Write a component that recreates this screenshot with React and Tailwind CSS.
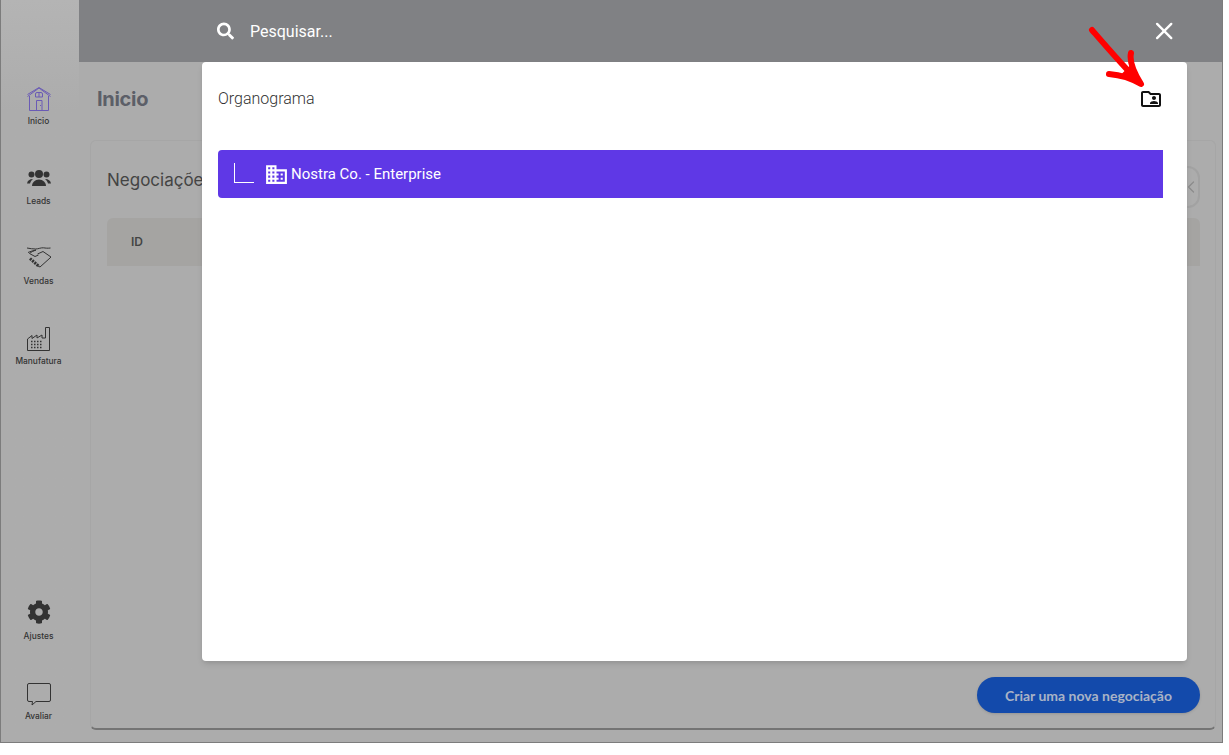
import React from 'react';
import { FaCog, FaSearch } from 'react-icons/fa';
import { MdOutlineFolderShared, MdDomain } from 'react-icons/md';
import { X, ChevronLeft } from 'lucide-react';

const HomeIcon = () => (
  <svg width="24" height="24" viewBox="0 0 24 24" fill="none" stroke="#6a5bb5" strokeWidth="1">
    <path d="M.5 9.500 12 1l11.500 8.500M.5 7.500 12 .5M23.500 7.500 12 .5" />
    <path d="M2.500 9v14.500h19V9" />
    <path d="M8.500 10V7a1.500 1.500 0 0 1 1.500-1.500h4A1.500 1.500 0 0 1 15.500 7v3h-7zM12 5.500V10" />
    <path d="M9.500 23.500V13.500h5.500v10M13 18.500h1" />
  </svg>
);

const LeadsIcon = () => (
  <svg width="24" height="17" viewBox="0 0 24 17" fill="#333" className="mb-[4px]">
    <circle cx="12" cy="4" r="4" />
    <circle cx="4.500" cy="4.500" r="3" />
    <circle cx="19.500" cy="4.500" r="3" />
    <path d="M5 16c0-3.500 3-6.500 7-6.500s7 3 7 6.500z" />
    <path d="M0 13.500C.5 10.500 2.500 9 6 9 4.500 10.200 3.500 11.800 3 13.500z" />
    <path d="M24 13.500C23.500 10.500 21.500 9 18 9c1.500 1.200 2.500 2.800 3 4.500z" />
  </svg>
);

const HandshakeIcon = () => (
  <svg width="24" height="24" viewBox="0 0 24 24" fill="none" stroke="#333" strokeWidth="1">
    <path d="M0 1c3 .6 6 1 8.500 1 3 0 5.500-1.500 8-1.200 2 .3 4 .6 7 .2" />
    <path d="M1 5.500C3.500 4.500 6 3.500 9 3 6.500 4 4 5 2.500 6.500L8 9.500l3.500-1.500" />
    <path d="M24 10 16 4.500 10.500 7" />
    <path d="M24 10l-1 1-10 9-2-1" />
    <path d="M3 11.500 12 19.500" strokeWidth="3" strokeDasharray="2 1" />
  </svg>
);

const FactoryIcon = () => (
  <svg width="24" height="24" viewBox="0 0 24 24" fill="none" stroke="#333" strokeWidth="1">
    <path d="M.5 23.500V12L5 8.500V11.500L10 8V11L15 8V11H18.500V.5H22.500V23.500Z" />
    <path d="M4 14.500h12M4 17.500h12M4 20.500h12" strokeWidth="1.500" strokeDasharray="1.500 1.500" />
  </svg>
);

const ChatIcon = () => (
  <svg width="24" height="23" viewBox="0 0 24 23" fill="none" stroke="#333" strokeWidth="1">
    <path d="M2 .5h20A1.500 1.500 0 0 1 23.500 2v15a1.500 1.500 0 0 1-1.500 1.500H9l-4 3.500 .5-3.500H2A1.500 1.500 0 0 1 .5 17V2A1.500 1.500 0 0 1 2 .5z" />
  </svg>
);

const navTop = [
  { label: 'Inicio', icon: <HomeIcon /> },
  { label: 'Leads', icon: <LeadsIcon /> },
  { label: 'Vendas', icon: <HandshakeIcon /> },
  { label: 'Manufatura', icon: <FactoryIcon /> },
];

const navBottom = [
  { label: 'Ajustes', icon: <FaCog size={24} color="#333" className="mb-[2px]" /> },
  { label: 'Avaliar', icon: <ChatIcon /> },
];

const NavItem = ({ label, icon }) => (
  <div className="h-[46px] flex flex-col items-center">
    <div className="h-[28px] flex items-end justify-center">{icon}</div>
    <span className="mt-[4px] text-[8.4px] leading-[12px] font-medium text-[#333]">{label}</span>
  </div>
);

export default function App() {
  return (
    <div className="relative w-[1229px] h-[755px] bg-white overflow-hidden font-['Inter',sans-serif]">
      {/* Page behind the overlay */}
      <div className="w-[1223px] h-[743px] flex bg-[#acacac] border-l border-r border-b border-[#7c7c7c]">
        <aside className="w-[78px] shrink-0 flex flex-col justify-between pt-[83px] pr-[3px] pb-[18px] bg-gradient-to-b from-[#b4b4b4] to-[#acacac] to-[15%]">
          <div className="flex flex-col gap-[34px]">
            {navTop.map((item) => <NavItem key={item.label} {...item} />)}
          </div>
          <div className="flex flex-col gap-[34px]">
            {navBottom.map((item) => <NavItem key={item.label} {...item} />)}
          </div>
        </aside>

        <main className="flex-1 min-w-0 flex flex-col">
          <div className="h-[62px] bg-[#808184] shrink-0" />
          <h1 className="h-[78px] pl-[18px] pt-[23px] text-[20px] leading-[28px] font-bold tracking-[-0.3px] text-[#5c5f68] shrink-0">Inicio</h1>
          <section className="w-[1126px] ml-[11px] h-[590px] rounded-md bg-[#acacac] border border-[#a6a6a6] border-b-[#747474] border-b-2 pl-[16px] pr-[15px] flex flex-col">
            <div className="h-[77px] flex items-center justify-between">
              <h2 className="pt-[2px] text-[17px] text-[#444]">Negociações</h2>
              <div className="w-[30px] h-[42px] mt-[15px] rounded-xl border-2 border-[#a2a2a2] flex items-center justify-end text-[#8c8c8c]">
                <ChevronLeft size={20} strokeWidth={1.5} className="-mr-[3px]" />
              </div>
            </div>
            <div className="h-[48px] rounded-t-md bg-[#a5a4a2] pl-[24px] flex items-center text-[12px] font-semibold text-[#444]">ID</div>
            <div className="flex-1 flex items-end justify-end pb-[15px]">
              <button className="w-[223px] h-[36px] rounded-full bg-[#134aab] text-[14px] font-bold text-[#a9b3c6] font-['Lato',sans-serif] shadow-sm">
                Criar uma nova negociação
              </button>
            </div>
          </section>
        </main>
      </div>

      {/* Search bar on top of the dimmed page */}
      <div className="absolute left-[217px] top-[18px] w-[961px] h-[26px] flex items-center text-white font-['Roboto',sans-serif]">
        <FaSearch size={18} />
        <span className="ml-[15px] pl-[1px] mt-[1px] text-[16px]">Pesquisar...</span>
        <X size={30} strokeWidth={2} className="ml-[817px]" />
      </div>

      {/* Organograma modal */}
      <div className="absolute left-[202px] top-[62px] w-[985px] h-[599px] bg-white rounded-[4px] shadow-md font-['Roboto',sans-serif]">
        <div className="h-[88px] pl-[16px] pr-[24px] pt-[2px] pb-[16px] flex items-center justify-between">
          <span className="text-[16px] font-light text-[#333]">Organograma</span>
          <MdOutlineFolderShared size={24} color="#111" />
        </div>
        <div className="ml-[16px] w-[945px] h-[48px] bg-[#5f38e6] rounded-l-[4px] flex items-center pl-[16px] text-white">
          <div className="w-[20px] h-[20px] mb-[3px] border-l border-b border-white" />
          <MdDomain size={25} className="ml-[10px]" />
          <span className="ml-[2px] text-[15px]">Nostra Co. - Enterprise</span>
        </div>
      </div>

      {/* Red annotation arrow */}
      <svg className="absolute left-[1085px] top-[24px]" width="60" height="70" viewBox="0 0 60 70" fill="none" stroke="#ff0000" strokeLinecap="round" strokeLinejoin="round">
        <path d="M7 6 C20 21 38 42 55 59" strokeWidth="6" />
        <path d="M46 29c-2 9 3 20 10 31C46 54 36 51 24 50" strokeWidth="6" />
        <path d="M46 42 55 59 38 50z" fill="#ff0000" strokeWidth="2" />
      </svg>
    </div>
  );
}
